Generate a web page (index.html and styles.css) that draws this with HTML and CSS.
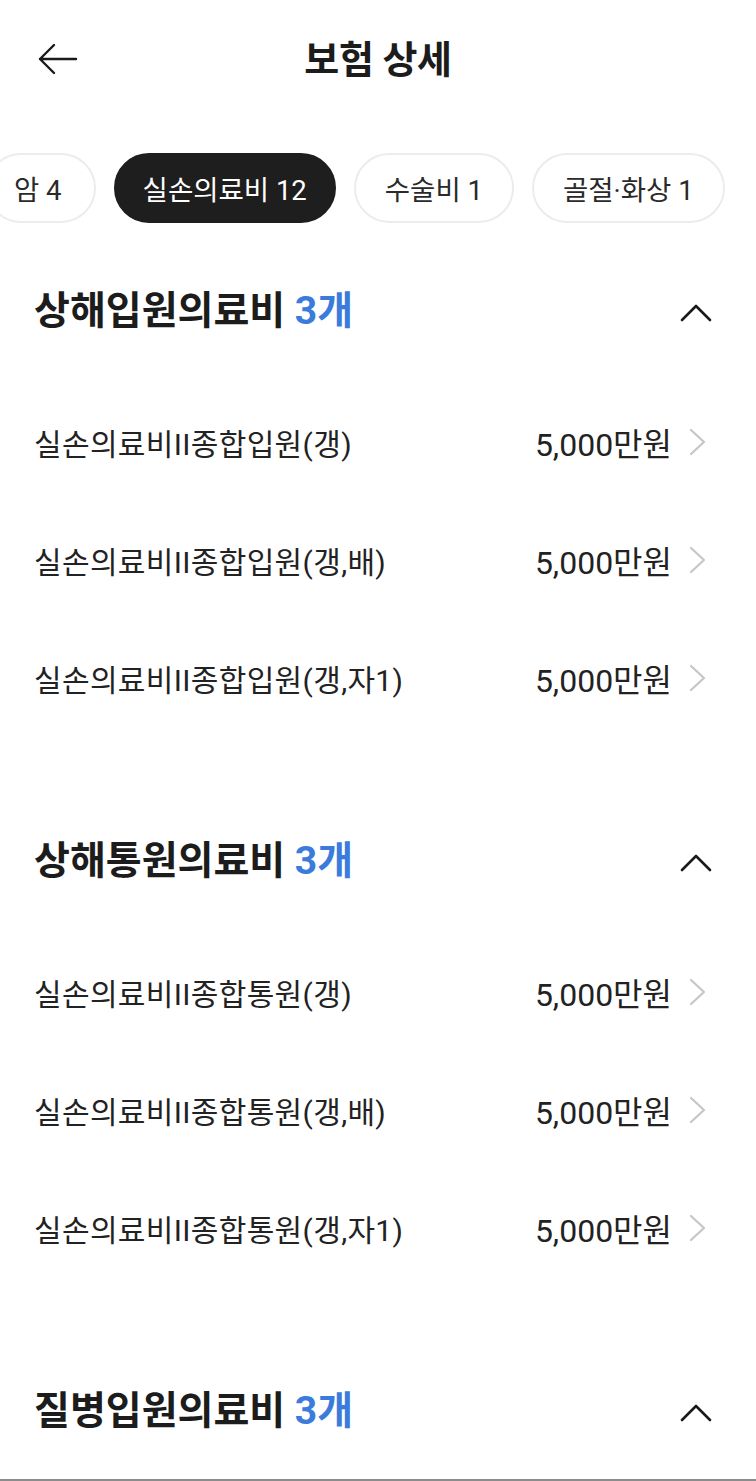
FILE: index.html
```html
<!DOCTYPE html>
<html lang="ko">
<head>
<meta charset="utf-8">
<title>보험 상세</title>
<link rel="stylesheet" href="styles.css">
</head>
<body>
<div class="screen">
  <header class="topbar">
    <button class="back" aria-label="뒤로">
      <svg width="40" height="32" viewBox="0 0 40 32"><path d="M38 16H2M16 2L2 16l14 14" fill="none" stroke="#1a1a1a" stroke-width="2.4" stroke-linecap="round" stroke-linejoin="round"/></svg>
    </button>
    <h1 class="title">보험 상세</h1>
  </header>

  <nav class="chips">
    <div class="chip-track">
      <span class="chip">암 4</span>
      <span class="chip chip-active">실손의료비 12</span>
      <span class="chip">수술비 1</span>
      <span class="chip">골절·화상 1</span>
    </div>
  </nav>

  <section class="group">
    <div class="group-head">
      <h2 class="group-title">상해입원의료비 <span class="count">3개</span></h2>
      <svg class="up" width="32" height="20" viewBox="0 0 32 20"><path d="M2 18L16 4l14 14" fill="none" stroke="#1a1a1a" stroke-width="2.6" stroke-linecap="round" stroke-linejoin="round"/></svg>
    </div>
    <ul class="items">
      <li class="item"><span class="name">실손의료비II종합입원(갱)</span><span class="amount">5,000만원</span><svg class="go" width="20" height="28" viewBox="0 0 20 28"><path d="M3 2l13 12L3 26" fill="none" stroke="#c6c6c6" stroke-width="2.2" stroke-linecap="round" stroke-linejoin="round"/></svg></li>
      <li class="item"><span class="name">실손의료비II종합입원(갱,배)</span><span class="amount">5,000만원</span><svg class="go" width="20" height="28" viewBox="0 0 20 28"><path d="M3 2l13 12L3 26" fill="none" stroke="#c6c6c6" stroke-width="2.2" stroke-linecap="round" stroke-linejoin="round"/></svg></li>
      <li class="item"><span class="name">실손의료비II종합입원(갱,자1)</span><span class="amount">5,000만원</span><svg class="go" width="20" height="28" viewBox="0 0 20 28"><path d="M3 2l13 12L3 26" fill="none" stroke="#c6c6c6" stroke-width="2.2" stroke-linecap="round" stroke-linejoin="round"/></svg></li>
    </ul>
  </section>

  <section class="group">
    <div class="group-head">
      <h2 class="group-title">상해통원의료비 <span class="count">3개</span></h2>
      <svg class="up" width="32" height="20" viewBox="0 0 32 20"><path d="M2 18L16 4l14 14" fill="none" stroke="#1a1a1a" stroke-width="2.6" stroke-linecap="round" stroke-linejoin="round"/></svg>
    </div>
    <ul class="items">
      <li class="item"><span class="name">실손의료비II종합통원(갱)</span><span class="amount">5,000만원</span><svg class="go" width="20" height="28" viewBox="0 0 20 28"><path d="M3 2l13 12L3 26" fill="none" stroke="#c6c6c6" stroke-width="2.2" stroke-linecap="round" stroke-linejoin="round"/></svg></li>
      <li class="item"><span class="name">실손의료비II종합통원(갱,배)</span><span class="amount">5,000만원</span><svg class="go" width="20" height="28" viewBox="0 0 20 28"><path d="M3 2l13 12L3 26" fill="none" stroke="#c6c6c6" stroke-width="2.2" stroke-linecap="round" stroke-linejoin="round"/></svg></li>
      <li class="item"><span class="name">실손의료비II종합통원(갱,자1)</span><span class="amount">5,000만원</span><svg class="go" width="20" height="28" viewBox="0 0 20 28"><path d="M3 2l13 12L3 26" fill="none" stroke="#c6c6c6" stroke-width="2.2" stroke-linecap="round" stroke-linejoin="round"/></svg></li>
    </ul>
  </section>

  <section class="group">
    <div class="group-head">
      <h2 class="group-title">질병입원의료비 <span class="count">3개</span></h2>
      <svg class="up" width="32" height="20" viewBox="0 0 32 20"><path d="M2 18L16 4l14 14" fill="none" stroke="#1a1a1a" stroke-width="2.6" stroke-linecap="round" stroke-linejoin="round"/></svg>
    </div>
  </section>
</div>
</body>
</html>
```

FILE: styles.css
```css
* { box-sizing: border-box; }
html, body { margin: 0; padding: 0; background: #fff; }
body {
  font-family: Roboto, "Noto Sans CJK KR", sans-serif;
  color: #1c1c1c;
}
.screen {
  height: 1481px;
  overflow: hidden;
  border-bottom: 2px solid #8c8c8c;
}
.topbar {
  position: relative;
  height: 118px;
  padding-bottom: 6px;
  display: flex;
  align-items: center;
  justify-content: center;
}
.back {
  position: absolute;
  left: 38px;
  top: 43px;
  padding: 0;
  border: 0;
  background: none;
  display: flex;
}
.title {
  margin: 0;
  font-size: 38px;
  font-weight: 700;
  letter-spacing: -0.4px;
  color: #1c1c1c;
}
.chips {
  padding-top: 35px;
  overflow: hidden;
}
.chip-track {
  display: flex;
  gap: 18px;
  margin-left: -14px;
  white-space: nowrap;
}
.chip {
  flex: none;
  height: 70px;
  padding: 0 29px;
  border: 2px solid #ececec;
  border-radius: 35px;
  display: flex;
  align-items: center;
  font-size: 27.5px;
  color: #2a2a2a;
}
.chip:first-child { padding: 0 32px 0 26px; }
.chip-active {
  padding: 0 27px;
  background: #1e1e1e;
  border-color: #1e1e1e;
  color: #fff;
}
.group {
  padding-bottom: 64px;
}
.chips + .group { margin-top: 30px; }
.group-head {
  height: 118px;
  padding: 0 44px 0 34px;
  display: flex;
  align-items: center;
  justify-content: space-between;
}
.group-title {
  margin: 0 0 10px;
  font-size: 39px;
  font-weight: 700;
  color: #1c1c1c;
}
.count { color: #3a7bdc; }
.items {
  list-style: none;
  margin: 0;
  padding: 14px 0 0;
}
.item {
  height: 118px;
  padding: 0 48px 4px 34px;
  display: flex;
  align-items: center;
  font-size: 30px;
  color: #222;
}
.name {
  flex: 1;
  letter-spacing: 0.35px;
}
.amount {
  font-size: 32px;
  margin-right: 16px;
}
.go { flex: none; }
```
